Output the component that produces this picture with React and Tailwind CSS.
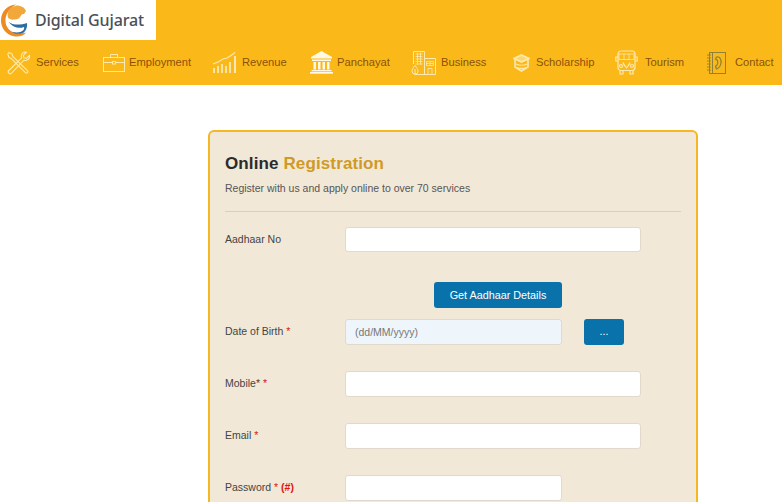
import React from 'react'

const ico = '#fde9b0'

function ServicesIcon() {
  return (
    <svg width="24" height="24" viewBox="0 0 24 24" fill="none" stroke={ico} strokeWidth="1.1">
      <path d="M2 1.500l3 1.500.8 2.500 14.700 14.200a1.400 1.400 0 0 1-2 2L4.300 7.500 2 6.500 0.800 3z" />
      <path d="M22.500 4.500l-3 3-2.500-.7-.7-2.500 3-3c-2.500-.6-5 1-5 3.700 0 .8.100 1.300.4 1.900L1.800 19.500a1.900 1.900 0 0 0 2.700 2.700L17 9.200c2.800 1 6.200-1.300 5.500-4.700z" />
    </svg>
  )
}

function EmploymentIcon() {
  return (
    <svg width="23" height="20" viewBox="0 0 23 20" fill="none" stroke={ico} strokeWidth="1">
      <rect x="0.500" y="4.500" width="21" height="14" />
      <path d="M7.500 4.500V1.500h7v3M0.500 9.500h9M12.500 9.500h9" />
      <rect x="9.500" y="8.500" width="3" height="2.500" />
    </svg>
  )
}

function RevenueIcon() {
  return (
    <svg width="25" height="22" viewBox="0 0 25 22" fill="none" stroke={ico} strokeWidth="1.800">
      <path d="M1 12l5-2 5-3 4-1 4-2.500 4-3" strokeWidth="1.200" />
      <path d="M2 21v-5M6 21v-7M10 21v-9M14 21v-7M18 21v-11" />
      <path d="M23 21V4" strokeWidth="2" />
    </svg>
  )
}

function PanchayatIcon() {
  return (
    <svg width="23" height="23" viewBox="0 0 23 23" fill="#fff8e4">
      <path d="M11.500 0L22 6v1.500H1V6z" />
      <rect x="2" y="8.500" width="19" height="1.500" />
      <rect x="3.500" y="11" width="2.500" height="7.500" />
      <rect x="8" y="11" width="2.500" height="7.500" />
      <rect x="12.500" y="11" width="2.500" height="7.500" />
      <rect x="17" y="11" width="2.500" height="7.500" />
      <rect x="1.500" y="19" width="20" height="1.300" />
      <rect x="0" y="21" width="23" height="1.700" />
    </svg>
  )
}

function BusinessIcon() {
  return (
    <svg width="25" height="24" viewBox="0 0 25 24" fill="none" stroke={ico} strokeWidth="1">
      <path d="M2.500 13V0.500h11V23.500M13.500 7.500h11v16h-21" />
      <path d="M4.500 3h7M4.500 5.500h7M4.500 8h7M4.500 10.500h7M4.500 13h7M6.500 1.500v12M9.500 1.500v12" strokeWidth="0.800" />
      <path d="M15.500 10.500h7v4h-7zM15.500 12.500h7M19 10.500v4M17 23.500v-6h4v6" strokeWidth="0.800" />
      <path d="M4 14.500c2 2.500 3 4 3 5.500a3 3 0 0 1-6 0c0-1.500 1-3 3-5.500zM4 18v5.500" />
    </svg>
  )
}

function ScholarshipIcon() {
  return (
    <svg width="17" height="18" viewBox="0 0 17 18" fill="none" stroke={ico} strokeWidth="1.600">
      <path d="M8.500 1L16 4.500 8.500 8 1 4.500z" fill={ico} fillOpacity="0.600" />
      <path d="M2 5v8l6.500 4 6.500-4V5" />
      <path d="M3 10c3 1.500 8 1.500 11 0M4 13.500c3 1.300 6 1.300 9 0" strokeWidth="1.300" />
    </svg>
  )
}

function TourismIcon() {
  return (
    <svg width="23" height="25" viewBox="0 0 23 25" fill="none" stroke={ico} strokeWidth="1.200">
      <rect x="3" y="1" width="17" height="19.500" rx="3" />
      <path d="M4 4h15v5.500H4zM9 4v5.500M14 4v5.500" strokeWidth="0.800" />
      <path d="M3 7H0.800v4H3M20 7h2.200v4H20" />
      <path d="M5 20.500V24h3v-3.500M15 20.500V24h3v-3.500M8 12.500c1 3 2.500 4 3.500 5.500 1-1.500 2.500-2.500 3.500-5.500" />
      <circle cx="6" cy="16" r="1.500" />
      <circle cx="17" cy="16" r="1.500" />
    </svg>
  )
}

function ContactIcon() {
  return (
    <svg width="20" height="22" viewBox="0 0 20 22" fill="none" stroke="#8f8238" strokeWidth="1">
      <rect x="3.500" y="0.500" width="16" height="21" />
      <path d="M6.500 0.500v21" />
      <path d="M1 3h4M1 6h4M1 9h4M1 12h4M1 15h4M1 18h4" strokeWidth="0.900" />
      <path d="M10.500 5c3.500-1 5 3 4.500 6s-2 5-4.500 6l-1-2.500 1.500-1.500c1-1.500 1-3 .5-4.500L9.500 7z" strokeWidth="1.300" />
    </svg>
  )
}

function Logo() {
  return (
    <svg width="28" height="36" viewBox="0 0 28 36" className="shrink-0">
      <path d="M16 2.500C7 3 1 10 1 18.500 1 26 6 33 15 34.500c5 .5 9-1 11-4-6 2-13 1-17-3C5 23.500 4 16 8 10c2-3 5-6 8-7.500z" fill="#ed8a22" />
      <path d="M8 10c2-4 6-6.500 10-6.500 4 .5 7 2.500 8 5.500l-2 3c-2-.5-3 1-3.500 2.500-1 2-3 3-6 3-3 .5-5-.500-6.500-1.500C7.500 14 7.500 12 8 10z" fill="#f2a73a" />
      <path d="M8.500 20c4 3 11 3.500 18.500 1 .5 4-1 8-4 10-3.500 1.500-8 1-11-1 5 1 9 .5 11-1.500 1-1 1.500-2.500 1-3.500-5 2-11 .5-15.500-5z" fill="#2b6ea6" />
    </svg>
  )
}

const navItems = [
  { label: 'Services', Icon: ServicesIcon, width: 'w-[96px]', iconBox: 'w-[29px]' },
  { label: 'Employment', Icon: EmploymentIcon, width: 'w-[109px]', iconBox: 'w-[26px]' },
  { label: 'Revenue', Icon: RevenueIcon, width: 'w-[98px]', iconBox: 'w-[30px]' },
  { label: 'Panchayat', Icon: PanchayatIcon, width: 'w-[101px]', iconBox: 'w-[27px]' },
  { label: 'Business', Icon: BusinessIcon, width: 'w-[102px]', iconBox: 'w-[30px]' },
  { label: 'Scholarship', Icon: ScholarshipIcon, width: 'w-[102px]', iconBox: 'w-[23px]' },
  { label: 'Tourism', Icon: TourismIcon, width: 'w-[91px]', iconBox: 'w-[30px]' },
  { label: 'Contact', Icon: ContactIcon, width: 'w-[76px]', iconBox: 'w-[29px]' },
]

function Field({ label, hint, className, inputClass, placeholder }) {
  return (
    <div className={`flex items-start ${className || ''}`}>
      <label className="w-[120px] pt-[5px] text-[10.500px] leading-[14px] text-[#444]">
        {label} <span className="text-[#e01515]">*</span>
        {hint && <span className="font-bold text-[#e01515]"> {hint}</span>}
      </label>
      <input
        placeholder={placeholder}
        className={`h-[26px] rounded-[3px] border border-[#e0d9cc] bg-white px-[9px] text-[10.500px] outline-none ${inputClass || 'w-[296px]'}`}
      />
    </div>
  )
}

export default function App() {
  return (
    <div className="h-[502px] overflow-hidden bg-white font-['Liberation_Sans',sans-serif]">
      <header className="bg-[#fbb919]">
        <div className="flex h-[40px] w-[156px] items-center bg-white">
          <Logo />
          <span className="ml-[7px] font-['Noto_Sans',sans-serif] text-[16px] font-medium tracking-[-0.12px] text-[#4a5058]">Digital Gujarat</span>
        </div>
        <nav className="flex h-[45px] items-center pl-[7px]">
          {navItems.map(({ label, Icon, width, iconBox }) => (
            <a key={label} className={`flex items-center ${width}`}>
              <span className={`flex shrink-0 items-center ${iconBox}`}><Icon /></span>
              <span className="text-[11.200px] text-[#8a5208]">{label}</span>
            </a>
          ))}
        </nav>
      </header>

      <main className="ml-[208px] mt-[45px] h-[500px] w-[490px] rounded-md border-2 border-[#f6b822] bg-[#f2e8d7] px-[15px] pt-[21px]">
        <h1 className="text-[17px] font-bold leading-[22px] tracking-[0.12px] text-[#2b2b2b]">
          Online <span className="text-[#cf9a26]">Registration</span>
        </h1>
        <p className="mt-[6px] text-[10.500px] leading-[14px] text-[#555]">Register with us and apply online to over 70 services</p>
        <hr className="mt-[16px] border-[#d9cfc0]" />

        <div className="mt-[15px] flex items-start">
          <label className="w-[120px] pt-[5px] text-[10.500px] leading-[14px] text-[#444]">Aadhaar No</label>
          <input className="h-[25px] w-[296px] rounded-[3px] border border-[#e0d9cc] bg-white outline-none" />
        </div>

        <button className="ml-[209px] mt-[30px] block h-[26px] w-[128px] rounded-[3px] bg-[#0a72ab] text-[10.800px] text-white">
          Get Aadhaar Details
        </button>

        <div className="mt-[11px] flex items-start">
          <Field
            label="Date of Birth"
            placeholder="(dd/MM/yyyy)"
            inputClass="w-[217px] !bg-[#eef5fb] placeholder:text-[#777]"
          />
          <button className="ml-[22px] h-[26px] w-[40px] rounded-[3px] bg-[#0a72ab] text-[10.500px] text-white">...</button>
        </div>

        <Field label="Mobile*" className="mt-[26px]" />
        <Field label="Email" className="mt-[26px]" />
        <Field label="Password" hint="(#)" className="mt-[26px]" inputClass="w-[217px]" />
      </main>
    </div>
  )
}
